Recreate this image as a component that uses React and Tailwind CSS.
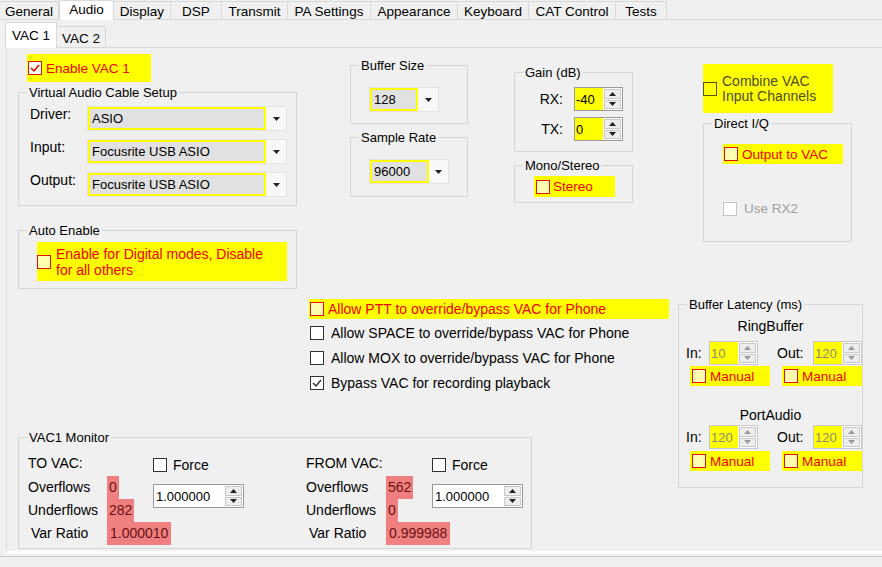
import React from 'react';

const outerTabs = [
  { label: 'General', w: 'w-[59px]' },
  { label: 'Audio', w: 'w-[55px]', active: true },
  { label: 'Display', w: 'w-[57px]' },
  { label: 'DSP', w: 'w-[51px]' },
  { label: 'Transmit', w: 'w-[66px]' },
  { label: 'PA Settings', w: 'w-[83px]' },
  { label: 'Appearance', w: 'w-[87px]' },
  { label: 'Keyboard', w: 'w-[71px]' },
  { label: 'CAT Control', w: 'w-[87px]' },
  { label: 'Tests', w: 'w-[51px]' },
];

function Check({ checked = false, tone = 'normal' }) {
  const box = {
    normal: 'border-[#333333] bg-white',
    red: 'border-[#e01010] bg-[#ffffb0]',
    redWhite: 'border-[#e01010] bg-[#fffff0]',
    olive: 'border-[#55551c] bg-[#ffff00]',
    disabled: 'border-[#c4c4c4] bg-white',
  }[tone];
  const stroke = tone === 'normal' ? '#333333' : '#e00000';
  return (
    <span className={`inline-flex h-[14px] w-[14px] shrink-0 items-center justify-center border ${box}`}>
      {checked ? (
        <svg width="12" height="12" viewBox="0 0 12 12">
          <path d="M2 6 L5 9 L10 3" fill="none" stroke={stroke} strokeWidth="1.5" />
        </svg>
      ) : null}
    </span>
  );
}

function Tri({ up = false, color = '#222222' }) {
  return (
    <svg width="7" height="4" viewBox="0 0 7 4">
      <path d={up ? 'M0 4h7L3.5 0z' : 'M0 0h7L3.5 4z'} fill={color} />
    </svg>
  );
}

function Combo({ value, className, yellowW }) {
  return (
    <div className={`flex h-[25px] border border-[#e2e2e2] bg-[#f8f8f8] ${className}`}>
      <div className={`flex items-center border-2 border-[#ffff00] bg-[#e1e1e1] pl-[2px] ${yellowW}`}>{value}</div>
      <div className="flex flex-1 items-center justify-center">
        <Tri />
      </div>
    </div>
  );
}

function Spin({ value, className, inputClass, disabled = false }) {
  const arrow = disabled ? '#9a9a9a' : '#222222';
  return (
    <div className={`flex h-[24px] border bg-white ${disabled ? 'border-[#c8c8c8]' : 'border-[#9a9a9a]'} ${className}`}>
      <div className={`flex items-center pl-[1px] ${inputClass}`}>{value}</div>
      <div className="ml-auto flex w-[19px] flex-col gap-[1px] p-[1px]">
        <div className="flex flex-1 items-center justify-center border border-[#c9c9c9] bg-[#ededed]">
          <Tri up color={arrow} />
        </div>
        <div className="flex flex-1 items-center justify-center border border-[#c9c9c9] bg-[#ededed]">
          <Tri color={arrow} />
        </div>
      </div>
    </div>
  );
}

function Group({ title, className, children }) {
  return (
    <fieldset className={`border border-[#d6d6d6] ${className}`}>
      <legend className="ml-[8px] px-[2px] leading-[15px]">{title}</legend>
      {children}
    </fieldset>
  );
}

function Manual() {
  return (
    <div className="flex h-[20px] w-[80px] items-center bg-[#ffff00] pl-[2px] text-[#f00000]">
      <Check tone="red" />
      <span className="ml-[4px] text-[13.5px]">Manual</span>
    </div>
  );
}

function Monitor({ title, over, under, ratio, labelW }) {
  return (
    <div className="flex text-[14px]">
      <div className={labelW}>
        <div className="h-[31px] pt-[11px]">{title}</div>
        <div className="flex h-[23px] items-center">Overflows</div>
        <div className="flex h-[23px] items-center">Underflows</div>
        <div className="flex h-[23px] items-center pl-[3px]">Var Ratio</div>
      </div>
      <div className="w-[46px] text-[#6a1010]">
        <div className="h-[31px]" />
        <div className="flex h-[23px] w-fit items-center bg-[#f08080] px-[2px]">{over}</div>
        <div className="flex h-[23px] w-fit items-center bg-[#f08080] px-[2px]">{under}</div>
        <div className="flex h-[23px] w-fit items-center bg-[#f08080] px-[3px]">{ratio}</div>
      </div>
      <div className="w-[91px]">
        <div className="flex h-[31px] items-center pt-[9px]">
          <Check />
          <span className="ml-[6px]">Force</span>
        </div>
        <Spin value="1.000000" className="mt-[8px] w-[91px] text-[13px]" inputClass="pl-[2px]" />
      </div>
    </div>
  );
}

function CheckRow({ label, checked }) {
  return (
    <div className="mt-[3px] ml-[2px] flex h-[22px] items-center text-[14px]">
      <Check checked={checked} />
      <span className="ml-[7px]">{label}</span>
    </div>
  );
}

export default function App() {
  return (
    <div className="h-[567px] w-[882px] overflow-hidden bg-[#f0f0f0] font-['Liberation_Sans',Arial,sans-serif] text-[13px] leading-[15px] text-black">
      <div className="flex h-[20px] items-start text-[13.5px]">
        {outerTabs.map((t) =>
          t.active ? (
            <div key={t.label} className={`flex h-[20px] justify-center border-x border-t border-[#d9d9d9] bg-white pt-[1px] ${t.w}`}>
              {t.label}
            </div>
          ) : (
            <div
              key={t.label}
              className={`mt-[1px] flex h-[19px] justify-center border-y border-r border-[#d9d9d9] bg-[#f0f0f0] pt-[2px] ${t.w}`}
            >
              {t.label}
            </div>
          )
        )}
        <div className="h-[20px] flex-1 border-b border-[#d9d9d9]" />
      </div>

      <div className="h-[537px] border-b border-[#c9c9c9]">
        <div className="flex h-[28px] items-end pl-[5px] text-[13.5px]">
          <div className="flex h-[26px] w-[52px] justify-center border-x border-t border-[#d9d9d9] bg-white pt-[5px]">VAC 1</div>
          <div className="flex h-[22px] w-[49px] justify-center border-y border-r border-[#d9d9d9] bg-[#f0f0f0] pt-[4px]">VAC 2</div>
          <div className="h-[1px] flex-1 bg-[#d9d9d9]" />
        </div>

        <div className="ml-[6px] h-[506px] border-l border-b-[3px] border-l-[#dcdcdc] border-b-white">
          {/* top section */}
          <div className="flex items-start">
            <div className="mt-[6px] ml-[11px] w-[279px]">
              <div className="ml-[9px] flex h-[28px] w-[124px] items-center bg-[#ffff00] pl-[1px] text-[13.5px] text-[#f00000]">
                <Check checked tone="redWhite" />
                <span className="ml-[4px]">Enable VAC 1</span>
              </div>
              <Group title="Virtual Audio Cable Setup" className="mt-[3px] h-[121px] w-[279px]">
                <div className="mt-[6px] flex items-start pl-[11px]">
                  <span className="w-[57px] pt-[1px] text-[14px]">Driver:</span>
                  <Combo value="ASIO" className="w-[200px]" yellowW="w-[178px]" />
                </div>
                <div className="mt-[8px] flex items-start pl-[11px]">
                  <span className="w-[57px] pt-[1px] text-[14px]">Input:</span>
                  <Combo value="Focusrite USB ASIO" className="w-[200px]" yellowW="w-[178px]" />
                </div>
                <div className="mt-[8px] flex items-start pl-[11px]">
                  <span className="w-[57px] pt-[1px] text-[14px]">Output:</span>
                  <Combo value="Focusrite USB ASIO" className="w-[200px]" yellowW="w-[178px]" />
                </div>
              </Group>
              <Group title="Auto Enable" className="mt-[17px] h-[66px] w-[279px]">
                <div className="mt-[4px] ml-[18px] flex h-[39px] w-[250px] items-center bg-[#ffff00] text-[#f00000]">
                  <Check tone="red" />
                  <span className="ml-[5px] text-[14px] leading-[16px]">
                    Enable for Digital modes, Disable
                    <br />
                    for all others
                  </span>
                </div>
              </Group>
            </div>

            <div className="mt-[10px] ml-[53px] w-[118px]">
              <Group title="Buffer Size" className="h-[66px] w-[118px]">
                <Combo value="128" className="mt-[14px] ml-[18px] w-[70px]" yellowW="w-[48px]" />
              </Group>
              <Group title="Sample Rate" className="mt-[6px] h-[67px] w-[118px]">
                <Combo value="96000" className="mt-[14px] ml-[18px] w-[80px]" yellowW="w-[59px]" />
              </Group>
            </div>

            <div className="mt-[17px] ml-[46px] w-[119px]">
              <Group title="Gain (dB)" className="h-[87px] w-[119px]">
                <div className="mt-[7px] flex h-[24px] items-center">
                  <span className="w-[48px] text-right text-[14px]">RX:</span>
                  <Spin value="-40" className="ml-[11px] w-[49px]" inputClass="w-[29px] bg-[#ffff00]" />
                </div>
                <div className="mt-[6px] flex h-[24px] items-center">
                  <span className="w-[48px] text-right text-[14px]">TX:</span>
                  <Spin value="0" className="ml-[11px] w-[49px]" inputClass="w-[29px] bg-[#ffff00]" />
                </div>
              </Group>
              <Group title="Mono/Stereo" className="mt-[6px] h-[45px] w-[119px]">
                <div className="mt-[3px] ml-[19px] flex h-[21px] w-[81px] items-center bg-[#ffff00] pl-[2px] text-[#f00000]">
                  <Check tone="red" />
                  <span className="ml-[3px] text-[13.5px]">Stereo</span>
                </div>
              </Group>
            </div>

            <div className="mt-[16px] ml-[70px] w-[149px]">
              <div className="flex h-[49px] w-[130px] items-center bg-[#ffff00] text-[#4d4d2a]">
                <Check tone="olive" />
                <span className="ml-[5px] text-[14px] leading-[15px]">
                  Combine VAC
                  <br />
                  Input Channels
                </span>
              </div>
              <Group title="Direct I/Q" className="mt-[3px] h-[126px] w-[149px]">
                <div className="mt-[13px] ml-[19px] flex h-[20px] w-[120px] items-center bg-[#ffff00] pl-[1px] text-[#f00000]">
                  <Check tone="red" />
                  <span className="ml-[4px] text-[13.5px]">Output to VAC</span>
                </div>
                <div className="mt-[37px] ml-[19px] flex h-[15px] items-center text-[#a0a0a0]">
                  <Check tone="disabled" />
                  <span className="ml-[7px] text-[13.5px]">Use RX2</span>
                </div>
              </Group>
            </div>
          </div>

          {/* lower section */}
          <div className="flex items-start">
            <div className="ml-[11px] w-[650px]">
              <div className="mt-[10px] ml-[291px] flex h-[20px] w-[360px] items-center bg-[#ffff00] pl-[1px] text-[#f00000]">
                <Check tone="red" />
                <span className="ml-[4px] text-[14px]">Allow PTT to override/bypass VAC for Phone</span>
              </div>
              <div className="ml-[290px]">
                <CheckRow label="Allow SPACE to override/bypass VAC for Phone" />
                <CheckRow label="Allow MOX to override/bypass VAC for Phone" />
                <CheckRow label="Bypass VAC for recording playback" checked />
              </div>
              <Group title="VAC1 Monitor" className="mt-[36px] h-[119px] w-[514px]">
                <div className="ml-[9px] flex">
                  <Monitor title="TO VAC:" over="0" under="282" ratio="1.000010" labelW="w-[79px]" />
                  <div className="ml-[62px]">
                    <Monitor title="FROM VAC:" over="562" under="0" ratio="0.999988" labelW="w-[80px]" />
                  </div>
                </div>
              </Group>
            </div>

            <Group title="Buffer Latency (ms)" className="mt-[8px] ml-[10px] h-[191px] w-[185px]">
              <div className="mt-[5px] h-[18px] text-center text-[14px] leading-[18px]">RingBuffer</div>
              <div className="mt-[6px] flex h-[24px] items-center">
                <span className="ml-[7px] w-[23px] text-[14px]">In:</span>
                <Spin value="10" disabled className="w-[49px]" inputClass="w-[28px] bg-[#ffff00] text-[#8c8c7a]" />
                <span className="ml-[19px] w-[36px] text-[14px]">Out:</span>
                <Spin value="120" disabled className="w-[49px]" inputClass="w-[28px] bg-[#ffff00] text-[#8c8c7a]" />
              </div>
              <div className="mt-[1px] flex">
                <div className="ml-[11px]">
                  <Manual />
                </div>
                <div className="ml-[12px]">
                  <Manual />
                </div>
              </div>
              <div className="mt-[20px] h-[18px] text-center text-[14px] leading-[18px]">PortAudio</div>
              <div className="mt-[1px] flex h-[24px] items-center">
                <span className="ml-[7px] w-[23px] text-[14px]">In:</span>
                <Spin value="120" disabled className="w-[49px]" inputClass="w-[28px] bg-[#ffff00] text-[#8c8c7a]" />
                <span className="ml-[19px] w-[36px] text-[14px]">Out:</span>
                <Spin value="120" disabled className="w-[49px]" inputClass="w-[28px] bg-[#ffff00] text-[#8c8c7a]" />
              </div>
              <div className="mt-[2px] flex">
                <div className="ml-[11px]">
                  <Manual />
                </div>
                <div className="ml-[12px]">
                  <Manual />
                </div>
              </div>
            </Group>
          </div>
        </div>
      </div>
    </div>
  );
}
